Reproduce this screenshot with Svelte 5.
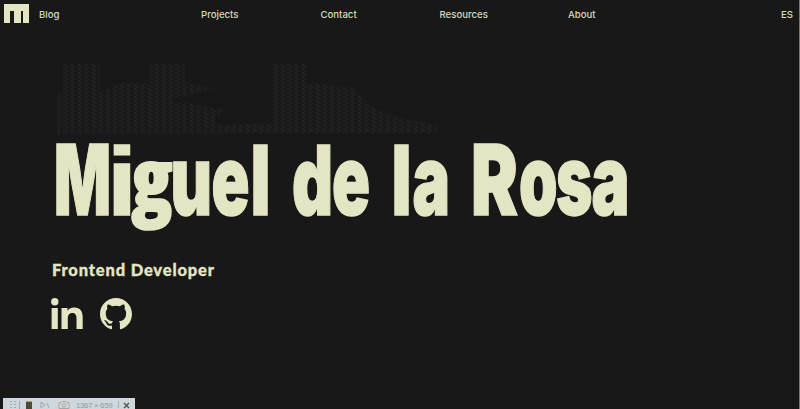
<script>
  const links = [
    { label: 'Blog', width: 162 },
    { label: 'Projects', width: 119.5 },
    { label: 'Contact', width: 119 },
    { label: 'Resources', width: 128.5 },
    { label: 'About', width: 213 }
  ];
  // Each glyph of the headline: character, left edge, advance.
  const words = [
    [['M', 54, 57], ['i', 107, 30], ['g', 131.500, 41], ['u', 170.500, 41.500], ['e', 211.500, 38], ['l', 250.500, 20]],
    [['d', 292, 41], ['e', 332, 38]],
    [['l', 391.500, 20], ['a', 412.500, 37.500]],
    [['R', 471, 47], ['o', 519, 38.500], ['s', 556, 36.500], ['a', 591.500, 38]]
  ];
</script>

<div class="page">
  <nav>
    <svg class="logo" width="25" height="19" viewBox="0 0 25 19"><path d="M0 0h25v19h-6V7h-2v12h-7V7H6v12H0z" /></svg>
    {#each links as link}
      <a href="#top" style="width: {link.width}px">{link.label}</a>
    {/each}
    <a href="#es">ES</a>
  </nav>

  <main>
    <svg class="title" width="800" height="110" viewBox="0 0 800 110" role="img" aria-label="Miguel de la Rosa">
      <defs>
        <pattern id="scan" width="7" height="4" patternUnits="userSpaceOnUse"><path d="M0 0h3v1H0zM2 1h3v1H2zM0 2h4v1H0zM3 3h3v1H3z" fill="#212121" /></pattern>
      </defs>
      <g fill="url(#scan)" transform="translate(0 -130)">
        <path d="M62 64h38v29l20-10h30V64h35v18l30 6-45 12 55 10-12 9 15 15H75l-18 1V93h5z" />
        <path d="M272 64h35v19l45 4 15 17 28 13 42 8v8H180v-6l92-4z" />
      </g>
      {#each words as word}
        <text y="85">{#each word as [char, x, advance]}<tspan class={char} {x} y={char === 'g' ? 80 : 85} textLength={advance} lengthAdjust="spacingAndGlyphs">{char}</tspan>{/each}</text>
      {/each}
    </svg>
    <h2>Frontend Developer</h2>
    <div class="social">
      <svg width="32" height="31" viewBox="0 0 32 31" aria-label="LinkedIn">
        <circle cx="3.8" cy="3.7" r="3.7" />
        <path d="M.6 10h6.2v21H.6zM10.5 10h6v2.9c1-2 3.200-3.400 6.500-3.400 6.500 0 8.700 4 8.700 10.100V31h-6.200V20.700c0-3.200-.7-5.700-4.100-5.700-3.500 0-4.600 2.500-4.600 5.700V31h-6.300z" />
      </svg>
      <svg width="32" height="32" viewBox="0 0 98 98" aria-label="GitHub">
        <path d="M49 0C22 0 0 22 0 49.200c0 21.800 14 40.200 33.400 46.700 2.400.5 3.300-1.100 3.300-2.400v-9C23 87.500 20.200 78.500 20.200 78.500c-2.200-5.700-5.400-7.200-5.400-7.200-4.500-3 .3-3 .3-3 4.900.3 7.500 5 7.500 5 4.300 7.500 11.300 5.400 14.200 4.100.4-3.200 1.700-5.400 3.100-6.600-10.900-1.100-22.300-5.400-22.300-24.300 0-5.400 2-9.800 5.100-13.200-.5-1.200-2.200-6.300.5-13 0 0 4.100-1.300 13.400 5a47 47 0 0 1 24.500 0c9.300-6.300 13.400-5 13.400-5 2.700 6.700 1 11.800.5 13 3.200 3.400 5.100 7.800 5.100 13.200 0 18.900-11.500 23.100-22.400 24.300 1.800 1.500 3.300 4.500 3.300 9.100v13.600c0 1.300.9 2.900 3.300 2.400C84 89.400 98 71 98 49.200 98 22 76 0 49 0z" />
      </svg>
    </div>
  </main>

  <footer>
    <svg width="23" height="12" viewBox="0 0 23 12"><path d="M7 3h2v1H7zM11 3h2v1h-2zM7 6h2v1H7zM11 6h2v1h-2zM7 9h2v1H7zM11 9h2v1h-2zM16 3h1v8h-1z" fill="#a3aaa6" /></svg>
    <i></i>
    <svg class="tools" width="41" height="12" viewBox="0 0 41 12" fill="none">
      <path d="M9 4v6l4-3zM15 5l2 5M27 4.500h2l1-1h4l1 1h2v6H27z" fill="none" stroke="#a5aaa7" /><circle cx="32" cy="7.500" r="1.800" fill="none" stroke="#a5aaa7" />
    </svg>
    <span>1367 × 659</span>
    <svg width="16" height="12" viewBox="0 0 16 12"><path d="M2.500 3v7" stroke="#aeb2a9" /><path d="M8 5l5 5M13 5l-5 5" stroke="#565b58" stroke-width="1.500" /></svg>
  </footer>
</div>

<style>
  :global(body) { margin: 0; background: #181818; }
  .page {
    height: 409px; box-sizing: border-box; overflow: hidden;
    display: flex; flex-direction: column;
    background: #181818; color: #e4e5c3; border-right: 1px solid #77786d;
    font-family: Lato, "Open Sans", sans-serif;
  }
  svg { display: block; flex: none; fill: #e4e5c3; }
  nav { display: flex; align-items: center; height: 27px; padding-left: 4px; box-sizing: border-box; flex: none; }
  .logo { margin-right: 10px; }
  nav a { color: #d8d8ba; font: 500 9.600px/14px Inter, sans-serif; text-decoration: none; white-space: nowrap; padding-top: 2px; flex: none; }
  main { flex: 1; padding-top: 38px; }
  .title { margin-bottom: 19.500px; margin-top: 65px; overflow: visible; }
  .title text {
    font: 900 98px Inter, sans-serif;
    stroke: #e4e5c3; stroke-width: 1.500px;
  }
  .title .l, .title .d { font-size: 96px; }
  .title .i { font: 700 97px "Liberation Sans", sans-serif; }
  .title .g { font: 800 85px "Open Sans", sans-serif; font-stretch: 75%; }
  h2 { margin: 0 0 18px 52px; font: 900 16.500px/20px Lato, sans-serif; letter-spacing: .83px; -webkit-text-stroke: .3px #e4e5c3; }
  .social { display: flex; gap: 17px; padding-left: 51px; }
  footer {
    display: flex; align-items: center; width: 132px; height: 11px; margin-left: 3px;
    background: #cdd7dc; color: #969c98; font: 8px/11px "Liberation Sans", sans-serif; flex: none;
  }
  footer i { width: 6px; height: 7px; margin-top: 3px; background: #4a4a36; border-top: 1px solid #a3a388; }
  footer span { width: 40px; margin-top: 3px; margin-left: 3px; white-space: nowrap; letter-spacing: -.4px; }
</style>
